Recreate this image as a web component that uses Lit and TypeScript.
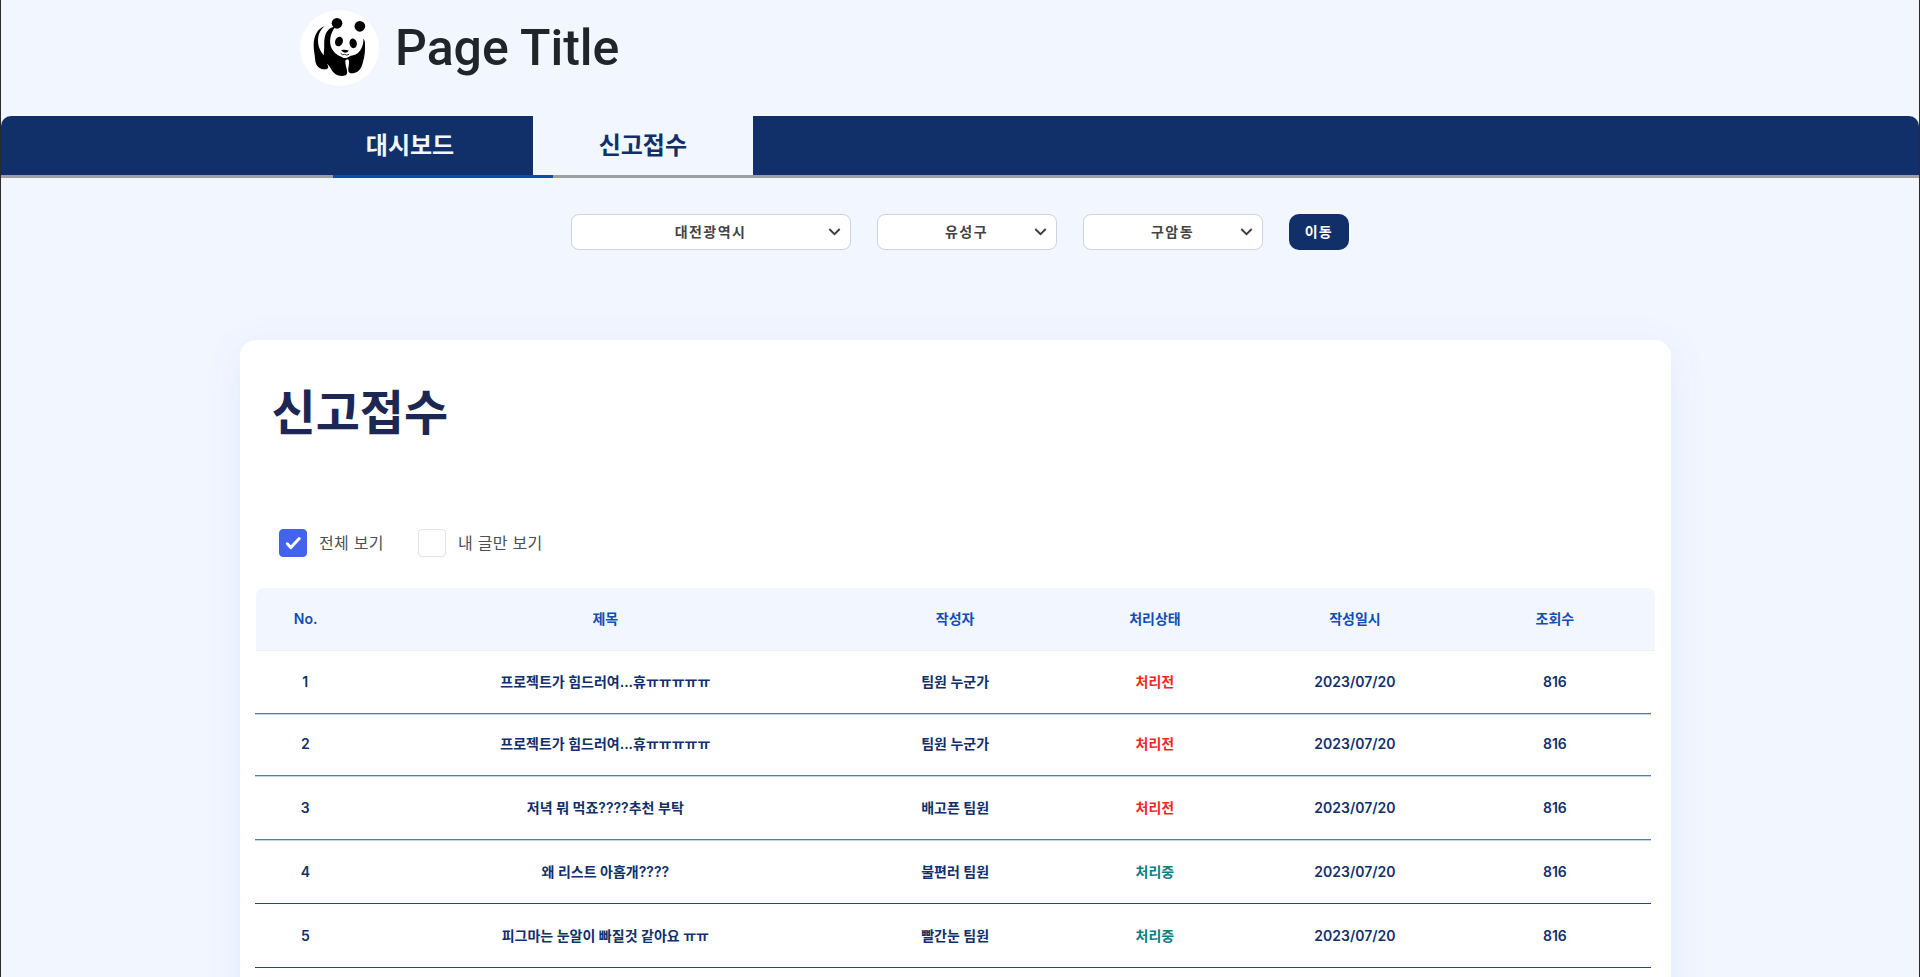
import { LitElement, html, css, svg } from "lit";
import { customElement, property } from "lit/decorators.js";
import { classMap } from "lit/directives/class-map.js";

interface Report {
  no: number;
  title: string;
  author: string;
  status: string;
  date: string;
  views: number;
}

const REPORTS: Report[] = [
  { no: 1, title: "프로젝트가 힘드러여...휴ㅠㅠㅠㅠㅠ", author: "팀원 누군가", status: "처리전", date: "2023/07/20", views: 816 },
  { no: 2, title: "프로젝트가 힘드러여...휴ㅠㅠㅠㅠㅠ", author: "팀원 누군가", status: "처리전", date: "2023/07/20", views: 816 },
  { no: 3, title: "저녁 뭐 먹죠????추천 부탁", author: "배고픈 팀원", status: "처리전", date: "2023/07/20", views: 816 },
  { no: 4, title: "왜 리스트 아홉개????", author: "불편러 팀원", status: "처리중", date: "2023/07/20", views: 816 },
  { no: 5, title: "피그마는 눈알이 빠질것 같아요 ㅠㅠ", author: "빨간눈 팀원", status: "처리중", date: "2023/07/20", views: 816 },
];

@customElement("panda-logo")
export class PandaLogo extends LitElement {
  static styles = css`
    :host { display: block; width: 79px; height: 76px; }
    svg { display: block; }
  `;
  render() {
    return html`<svg width="79" height="76" viewBox="60 30 237 228">
      ${svg`
        <ellipse cx="178.500" cy="144" rx="118.500" ry="114" fill="#fff"/>
        <circle cx="171" cy="70" r="16"/>
        <circle cx="239.500" cy="79" r="16"/>
        <path d="M134 79C112 86 101 108 101 137C101 151 104 160 105 174C106 195 114 206 131 208C141 209 147 205 144 198C140 190 140 183 137 172C123 157 115 145 114 123C114 104 121 89 134 79Z"/>
        <path d="M166 80C150 80 138 92 134 113C131 127 134 139 132 153C129 173 134 186 145 195C152 202 154 212 163 220C172 228 187 230 197 226C203 222 202 214 200 206C197 194 194 183 198 179C202 176 207 177 207 184C208 194 204 203 205 212C206 219 213 221 222 219C238 216 245 203 249 186C254 170 256 151 255 132C255 124 253 118 250 116C251 134 244 149 233 160C225 167 214 166 207 170C201 174 191 176 184 170C170 165 158 154 153 140C148 126 149 101 166 80Z"/>
        <ellipse cx="177" cy="124.500" rx="11.500" ry="14.500" transform="rotate(22 177 124.500)"/>
        <ellipse cx="219.500" cy="130" rx="11" ry="14.500" transform="rotate(-12 219.500 130)"/>
        <path d="M183 150Q195 147 207 152Q202 158 195 158Q188 157 183 150Z"/>
        <path d="M182 160Q188 167 194 163Q200 168 207 163" fill="none" stroke="#000" stroke-width="2.500"/>
      `}
    </svg>`;
  }
}

@customElement("region-select")
export class RegionSelect extends LitElement {
  @property() value = "";
  static styles = css`
    :host {
      display: grid; box-sizing: border-box; height: 36px; align-items: center;
      grid-template-columns: 24px 1fr 24px; padding: 0 3px;
      background: #fff; border: 1px solid #cdd1e2; border-radius: 8px;
    }
    .label {
      grid-column: 2; text-align: center; color: #444; line-height: 20px; margin-right: 1px;
      font-size: 14px; font-weight: 700; letter-spacing: 1.4px; white-space: nowrap;
    }
  `;
  render() {
    return html`<span class="label">${this.value}</span>
      <svg width="24" height="24" viewBox="0 0 24 24" fill="none" stroke="#3a3a3a" stroke-width="1.8">
        <path d="M6.300 9l5.200 5.200L16.700 9" />
      </svg>`;
  }
}

@customElement("check-option")
export class CheckOption extends LitElement {
  @property() label = "";
  @property({ type: Boolean }) checked = false;
  static styles = css`
    :host { display: flex; align-items: center; gap: 12px; }
    .box {
      box-sizing: border-box; width: 28px; height: 28px; border-radius: 4px;
      border: 1px solid #e2e4e8; background: #fff; display: grid; place-items: center;
    }
    .on { background: #4263eb; border-color: #4263eb; }
    .text { font-size: 16px; line-height: 24px; margin-top: -1px; color: #495057; letter-spacing: 0.3px; white-space: nowrap; }
  `;
  render() {
    return html`<span class=${classMap({ box: true, on: this.checked })}>
        ${this.checked
          ? html`<svg width="26" height="26" viewBox="0 0 26 26" fill="none" stroke="#fff" stroke-width="3" stroke-linecap="round" stroke-linejoin="round">
              <path d="M7.300 13.800l3.600 3.800 8.300-9" />
            </svg>`
          : ""}
      </span>
      <span class="text">${this.label}</span>`;
  }
}

@customElement("app-root")
export class AppRoot extends LitElement {
  static styles = css`
    :host {
      display: block; box-sizing: border-box; width: 100%; height: 977px; overflow: hidden;
      background: #f2f6ff; border: solid #2b2b2b; border-width: 0 1px;
      font-family: Inter, "Noto Sans CJK KR", sans-serif;
    }
    .header { display: flex; align-items: flex-start; gap: 16px; height: 116px; padding: 10px 0 0 299px; box-sizing: border-box; }
    .title { margin: 8px 0 0; font: 500 50px/60px Roboto, sans-serif; color: #212529; white-space: nowrap; }
    .nav {
      display: flex; height: 59px; background: #11306a; border-radius: 10px 10px 0 0;
      padding-left: 288px;
    }
    .tab { display: grid; place-items: center; font-size: 24px; line-height: 36px; font-weight: 700; color: #f2f6ff; }
    .first { width: 244px; padding-right: 2px; box-sizing: border-box; }
    .active { width: 219.67px; background: #f2f6ff; color: #11306a; }
    .rule { height: 3px; background: #9f9fa1; padding-left: 332px; }
    .marker { width: 220px; height: 3px; background: #0f4cb2; }
    .filters { display: flex; gap: 26px; margin: 36px 0 0 570px; }
    .wide { width: 280px; }
    .narrow { width: 180px; }
    .go {
      width: 60.5px; height: 36px; margin-left: -0.5px; padding: 0 0 2px; border: 0; border-radius: 10px;
      background: #11306a; color: #fff; font: inherit; font-size: 14px; font-weight: 700; letter-spacing: 1.2px;
    }
    .card {
      box-sizing: border-box; width: 1431px; height: 760px; margin: 90px 0 0 239px; padding: 37px 16px 0;
      background: #fff; border-radius: 16px; box-shadow: 0 8px 40px rgba(66, 99, 235, 0.08);
    }
    .heading { margin: 0 0 0 15.500px; font-size: 48px; line-height: 72px; font-weight: 700; color: #1c2853; }
    .checks { display: flex; gap: 34px; margin: 80px 0 31px 23px; }
    .row {
      display: grid; grid-template-columns: 100px 500px 199.600px 200px 200px 200px;
      align-items: center; justify-items: center; box-sizing: border-box;
      font-size: 14px; line-height: 20px; font-weight: 600; color: #11306a; white-space: nowrap;
      width: 1395.400px; height: 64px; margin-left: -0.700px; border-bottom: 1px solid #124aac;
    }
    .soft { border-bottom-color: #487bca; box-shadow: 0 1px 0 #c3d1ec; }
    .tall { height: 63px; }
    .short { height: 62px; padding-bottom: 1px; }
    .head {
      grid-template-columns: 99.300px 500px 199.600px 200px 200px 200px;
      width: 1399px; height: 63px; margin-left: 0; border-bottom: 1px solid #eeedf8;
      background: #f2f6ff; border-radius: 8px 8px 0 0; color: #124db4;
    }
    .before { color: #f32626; }
    .working { color: #08807e; }
  `;

  private renderRow(r: Report, i: number) {
    const status = { before: r.status === "처리전", working: r.status === "처리중" };
    return html`<div class=${classMap({ row: true, soft: i < 3, tall: i === 0, short: i === 1 })}>
      <span>${r.no}</span><span>${r.title}</span><span>${r.author}</span>
      <span class=${classMap(status)}>${r.status}</span>
      <span>${r.date}</span><span>${r.views}</span>
    </div>`;
  }

  render() {
    return html`
      <header class="header"><panda-logo></panda-logo><h1 class="title">Page Title</h1></header>
      <nav class="nav">
        <div class="tab first">대시보드</div>
        <div class="tab active">신고접수</div>
      </nav>
      <div class="rule"><div class="marker"></div></div>
      <div class="filters">
        <region-select class="wide" value="대전광역시"></region-select>
        <region-select class="narrow" value="유성구"></region-select>
        <region-select class="narrow" value="구암동"></region-select>
        <button class="go">이동</button>
      </div>
      <main class="card">
        <h2 class="heading">신고접수</h2>
        <div class="checks">
          <check-option label="전체 보기" checked></check-option>
          <check-option label="내 글만 보기"></check-option>
        </div>
        <div class="row head">
          <span>No.</span><span>제목</span><span>작성자</span><span>처리상태</span><span>작성일시</span><span>조회수</span>
        </div>
        ${REPORTS.map((r, i) => this.renderRow(r, i))}
      </main>
    `;
  }
}
